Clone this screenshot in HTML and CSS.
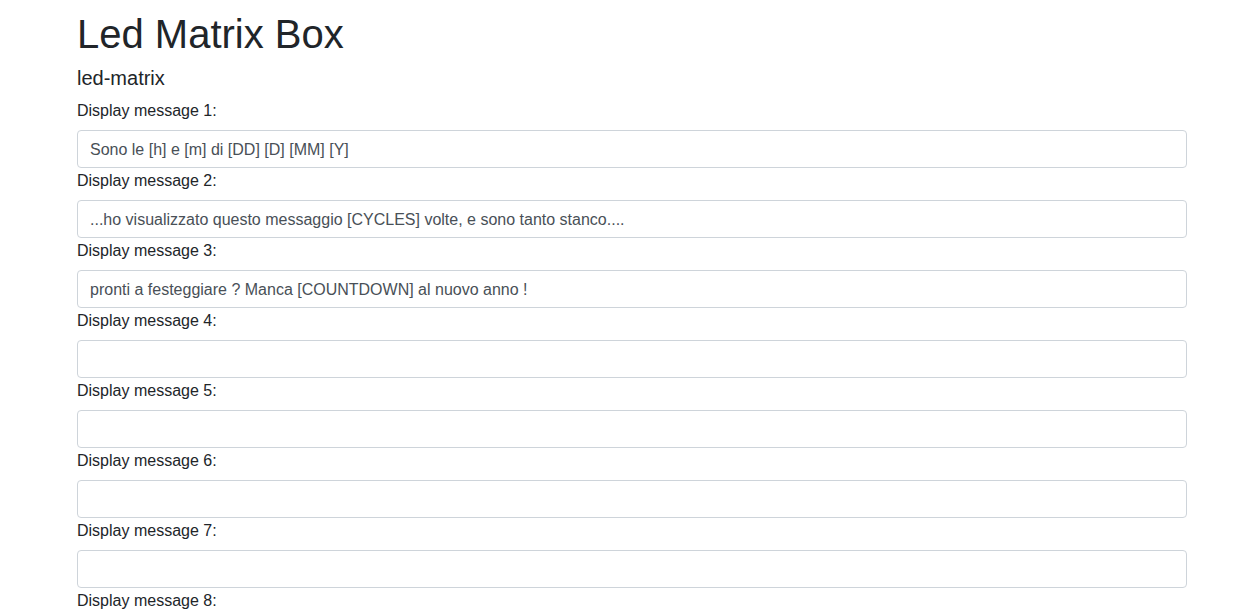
FILE: index.html
```html
<!DOCTYPE html>
<html lang="it">
<head>
<meta charset="utf-8">
<title>Led Matrix Box</title>
<link rel="stylesheet" href="styles.css">
</head>
<body>
<div class="page">
  <h1 class="title">Led Matrix Box</h1>
  <h5 class="subtitle">led-matrix</h5>
  <form class="form">
    <label class="label" for="m1">Display message 1:</label>
    <input class="control" id="m1" type="text" value="Sono le [h] e [m] di [DD] [D] [MM] [Y]">
    <label class="label" for="m2">Display message 2:</label>
    <input class="control" id="m2" type="text" value="...ho visualizzato questo messaggio [CYCLES] volte, e sono tanto stanco....">
    <label class="label" for="m3">Display message 3:</label>
    <input class="control" id="m3" type="text" value="pronti a festeggiare ? Manca [COUNTDOWN] al nuovo anno !">
    <label class="label" for="m4">Display message 4:</label>
    <input class="control" id="m4" type="text" value="">
    <label class="label" for="m5">Display message 5:</label>
    <input class="control" id="m5" type="text" value="">
    <label class="label" for="m6">Display message 6:</label>
    <input class="control" id="m6" type="text" value="">
    <label class="label" for="m7">Display message 7:</label>
    <input class="control" id="m7" type="text" value="">
    <label class="label" for="m8">Display message 8:</label>
    <input class="control" id="m8" type="text" value="">
  </form>
</div>
</body>
</html>
```

FILE: styles.css
```css
html, body {
  margin: 0;
  padding: 0;
  background: #fff;
}
body {
  font-family: "Liberation Sans", Arial, Helvetica, sans-serif;
  font-size: 16px;
  line-height: 1.5;
  color: #212529;
}
.page {
  padding: 10px 57px 0 77px;
}
.title {
  margin: 0 0 8px;
  font-size: 40px;
  font-weight: 500;
  line-height: 1.2;
}
.subtitle {
  margin: 0 0 8px;
  font-size: 20px;
  font-weight: 500;
  line-height: 1.2;
}
.form {
  display: flex;
  flex-direction: column;
  margin: 0;
}
.label {
  display: block;
  margin: 0 0 7px;
  padding-top: 1px;
  font-size: 16px;
  line-height: 24px;
}
.control {
  display: block;
  box-sizing: border-box;
  width: 100%;
  height: 38px;
  margin: 0;
  padding: 7px 12px 5px;
  font-family: inherit;
  font-size: 16px;
  line-height: 1.5;
  color: #495057;
  background: #fff;
  border: 1px solid #ced4da;
  border-radius: 4px;
  outline: none;
}
```
